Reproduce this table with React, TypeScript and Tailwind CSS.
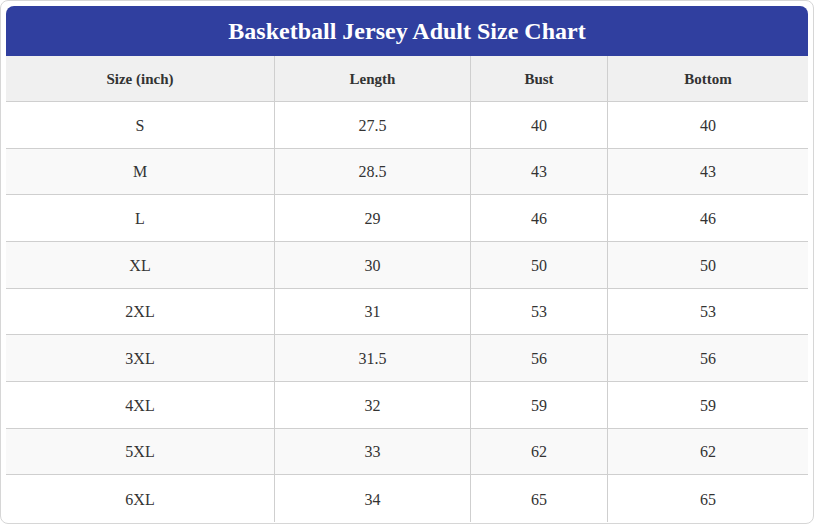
import React from 'react';

const rows = [
  ['S', '27.5', '40', '40'],
  ['M', '28.5', '43', '43'],
  ['L', '29', '46', '46'],
  ['XL', '30', '50', '50'],
  ['2XL', '31', '53', '53'],
  ['3XL', '31.5', '56', '56'],
  ['4XL', '32', '59', '59'],
  ['5XL', '33', '62', '62'],
  ['6XL', '34', '65', '65'],
];

const headers = ['Size (inch)', 'Length', 'Bust', 'Bottom'];
const colWidths = ['w-[269px]', 'w-[196px]', 'w-[137px]', 'flex-1'];

const App: React.FC = () => {
  return (
    <div className="min-h-screen bg-white font-['Liberation_Serif',serif]">
      <div className="w-[814px] h-[524px] border border-[#d6d6d6] rounded-[8px] p-[5px] overflow-hidden">
        <div className="h-[50px] bg-[#303f9f] rounded-t-[8px] flex items-center justify-center">
          <h1 className="text-white text-[24px] font-bold">Basketball Jersey Adult Size Chart</h1>
        </div>

        {/* header row */}
        <div className="flex h-[46px] bg-[#f0f0f0] border-b border-[#cfcfcf]">
          {headers.map((h, i) => (
            <div
              key={h}
              className={`${colWidths[i]} flex items-center justify-center pt-[2px] text-[15px] font-bold text-[#333] ${
                i < 3 ? 'border-r border-[#cfcfcf]' : ''
              }`}
            >
              {h}
            </div>
          ))}
        </div>

        {rows.map((row, r) => (
          <div
            key={row[0]}
            className={`flex h-[46.67px] ${r % 2 === 1 ? 'bg-[#f9f9f9]' : 'bg-white'} ${
              r < rows.length - 1 ? 'border-b border-[#cfcfcf]' : ''
            }`}
          >
            {row.map((cell, i) => (
              <div
                key={i}
                className={`${colWidths[i]} flex items-center justify-center pt-[2px] text-[16px] text-[#333] ${
                  i < 3 ? 'border-r border-[#cfcfcf]' : ''
                }`}
              >
                {cell}
              </div>
            ))}
          </div>
        ))}
      </div>
    </div>
  );
};

export default App;
